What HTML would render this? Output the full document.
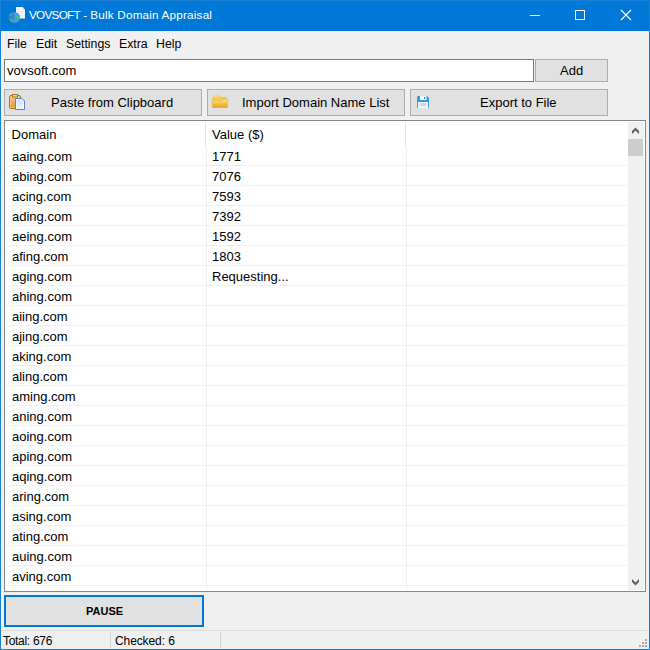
<!DOCTYPE html>
<html><head><meta charset="utf-8">
<style>
*{margin:0;padding:0;box-sizing:border-box}
html,body{width:650px;height:650px;overflow:hidden;background:#F0F0F0}
body{position:relative;font-family:"Liberation Sans",sans-serif;font-size:12px;color:#000}
.a{position:absolute}
.t{position:absolute;white-space:pre;line-height:1}
#win{left:0;top:0;width:650px;height:650px;border:1px solid #1A80D6}
#title{left:1px;top:1px;width:648px;height:30px;background:#0078D7}
.btn{position:absolute;background:#E1E1E1;border:1px solid #ADADAD}
.c{font-size:13px}
.m{font-size:12.3px}
.hl{position:absolute;height:1px;background:#F0F0F0;left:6px;width:621px}
.vl{position:absolute;width:1px;background:#F0F0F0;top:146px;height:444px}
</style></head><body>
<div class="a" id="win"></div>
<div class="a" id="title">
  <svg class="a" style="left:-1px;top:-1px" width="30" height="30" viewBox="0 0 30 30">
    <path d="M16 7 H22.5 L25 9.5 V18.5 H16 Z" fill="#F7F7F7"/>
    <path d="M22.5 7 V9.5 H25 Z" fill="#D9D4CC"/>
    <path d="M17.5 11.5 H23.5 M17.5 13.5 H23.5 M17.5 15.5 H23.5" stroke="#E2E2E2" stroke-width="0.7"/>
    <circle cx="14.5" cy="17.4" r="5.5" fill="#4A9BE0"/>
    <path d="M14 11.9 A5.5 5.5 0 0 0 14 22.9 Z" fill="#3A82C6"/>
    <path d="M9.6 15.5 Q10.5 13 12.3 12.7 Q12.2 15 10.2 16.3 Z" fill="#2FC56A"/>
    <path d="M10 19 Q12 18.2 13.8 20 Q13.5 22.5 11.8 22.2 Q10.2 21 10 19 Z" fill="#2FC56A"/>
    <path d="M16.5 16.5 Q17.5 14.5 19.5 15.5 Q20.3 18 18.7 19.5 Q16.5 19.3 16.5 16.5 Z" fill="#33D06E"/>
  </svg>
  <div class="t" style="left:28px;top:8px;color:#fff;font-size:11.7px"><span style="letter-spacing:-0.7px">VOVSOFT</span><span style="letter-spacing:0px"> - </span><span style="letter-spacing:0.2px">Bulk Domain Appraisal</span></div>
  <div class="a" style="left:529px;top:14px;width:10px;height:1px;background:#fff"></div>
  <div class="a" style="left:574px;top:9px;width:10px;height:10px;border:1px solid #fff"></div>
  <svg class="a" style="left:619px;top:8px" width="13" height="13" viewBox="0 0 13 13">
    <path d="M1 1 L11 11 M11 1 L1 11" stroke="#fff" stroke-width="1.1"/>
  </svg>
</div>
<!-- menu -->
<div class="t m" style="left:7px;top:38px">File</div>
<div class="t m" style="left:36px;top:38px">Edit</div>
<div class="t m" style="left:66px;top:38px">Settings</div>
<div class="t m" style="left:119px;top:38px">Extra</div>
<div class="t m" style="left:156px;top:38px">Help</div>
<!-- edit -->
<div class="a" style="left:4px;top:59px;width:530px;height:23px;background:#fff;border:1px solid #7A7A7A"></div>
<div class="t c" style="left:7px;top:64px">vovsoft.com</div>
<div class="btn" style="left:535px;top:59px;width:73px;height:23px"></div>
<div class="t c" style="left:560px;top:64px">Add</div>
<!-- buttons -->
<div class="btn" style="left:4px;top:89px;width:198px;height:27px"></div>
<div class="btn" style="left:207px;top:89px;width:198px;height:27px"></div>
<div class="btn" style="left:410px;top:89px;width:198px;height:27px"></div>
<div class="t c" style="left:51px;top:96px">Paste from Clipboard</div>
<div class="t c" style="left:242px;top:96px">Import Domain Name List</div>
<div class="t c" style="left:480px;top:96px">Export to File</div>
<!-- icons -->
<svg class="a" style="left:8px;top:93px" width="20" height="18" viewBox="0 0 20 18">
  <defs>
    <linearGradient id="cb" x1="0" y1="0" x2="0" y2="1"><stop offset="0" stop-color="#F3CC88"/><stop offset="1" stop-color="#D9953A"/></linearGradient>
    <linearGradient id="dc" x1="0" y1="0" x2="1" y2="1"><stop offset="0" stop-color="#C9DDF7"/><stop offset="1" stop-color="#F4F8FE"/></linearGradient>
    <linearGradient id="fd" x1="0" y1="0" x2="0" y2="1"><stop offset="0" stop-color="#FBE38A"/><stop offset="1" stop-color="#E8A30E"/></linearGradient>
  </defs>
  <rect x="1.5" y="2.5" width="11" height="13" rx="1.5" fill="url(#cb)" stroke="#B06F1C"/>
  <rect x="2.5" y="3.5" width="9" height="11" rx="0.5" fill="none" stroke="#F6D79E" stroke-width="0.6"/>
  <rect x="4.5" y="1.5" width="5" height="2.5" fill="#F8DE7A" stroke="#B06F1C" stroke-width="0.9"/>
  <path d="M7.5 5.5 H14 L16.5 8 V16.5 H7.5 Z" fill="url(#dc)" stroke="#4F86D8"/>
  <path d="M8.5 6.5 H13.6 L15.5 8.4 V15.5 H8.5 Z" fill="none" stroke="#FFFFFF" stroke-width="0.7" opacity="0.8"/>
</svg>
<svg class="a" style="left:211px;top:95px" width="18" height="14" viewBox="0 0 18 14">
  <path d="M2 2.5 Q2 1 3.5 1 H8.8 L10.3 2.6 H14.8 Q15.8 2.6 15.8 3.6 V12.5 H2 Z" fill="#F3CF4E" stroke="#DDB13C" stroke-width="0.5"/>
  <path d="M2.6 1.6 H8.6" stroke="#FBEA9A" stroke-width="0.8"/>
  <path d="M1.2 5.2 H11 Q11.8 5.2 12.4 4.3 H16.6 Q17 4.3 16.9 4.8 L16.3 12.5 H1.6 Z" fill="url(#fd)" stroke="#E0B035" stroke-width="0.5"/>
</svg>
<svg class="a" style="left:417px;top:96px" width="12" height="12" viewBox="0 0 12 12">
  <path d="M1.2 0 H10 L12 2 V10.8 Q12 12 10.8 12 H1.2 Q0 12 0 10.8 V1.2 Q0 0 1.2 0 Z" fill="#3A98DF"/>
  <rect x="3" y="0" width="6.5" height="4" fill="#F4F8FC"/>
  <rect x="7" y="1" width="1.3" height="2" fill="#2F8CDB"/>
  <rect x="1" y="6" width="10" height="6" fill="#F2F6FA"/>
  <rect x="2.8" y="7" width="6.5" height="3.2" fill="#D3D8DD"/>
</svg>
<!-- list -->
<div class="a" style="left:4px;top:120px;width:642px;height:472px;background:#fff;border:1px solid #828790"></div>
<div class="t c" style="left:11.6px;top:128px">Domain</div>
<div class="t c" style="left:212px;top:128px">Value ($)</div>
<div class="a" style="left:205px;top:122px;width:1px;height:24px;background:#E5E5E5"></div>
<div class="a" style="left:405px;top:122px;width:1px;height:24px;background:#E5E5E5"></div>
<div id="rows">
<div class="hl" style="top:165px"></div>
<div class="hl" style="top:185px"></div>
<div class="hl" style="top:205px"></div>
<div class="hl" style="top:225px"></div>
<div class="hl" style="top:245px"></div>
<div class="hl" style="top:265px"></div>
<div class="hl" style="top:285px"></div>
<div class="hl" style="top:305px"></div>
<div class="hl" style="top:325px"></div>
<div class="hl" style="top:345px"></div>
<div class="hl" style="top:365px"></div>
<div class="hl" style="top:385px"></div>
<div class="hl" style="top:405px"></div>
<div class="hl" style="top:425px"></div>
<div class="hl" style="top:445px"></div>
<div class="hl" style="top:465px"></div>
<div class="hl" style="top:485px"></div>
<div class="hl" style="top:505px"></div>
<div class="hl" style="top:525px"></div>
<div class="hl" style="top:545px"></div>
<div class="hl" style="top:565px"></div>
<div class="hl" style="top:585px"></div>
<div class="t c" style="left:12px;top:150px">aaing.com</div>
<div class="t c" style="left:212px;top:150px">1771</div>
<div class="t c" style="left:12px;top:170px">abing.com</div>
<div class="t c" style="left:212px;top:170px">7076</div>
<div class="t c" style="left:12px;top:190px">acing.com</div>
<div class="t c" style="left:212px;top:190px">7593</div>
<div class="t c" style="left:12px;top:210px">ading.com</div>
<div class="t c" style="left:212px;top:210px">7392</div>
<div class="t c" style="left:12px;top:230px">aeing.com</div>
<div class="t c" style="left:212px;top:230px">1592</div>
<div class="t c" style="left:12px;top:250px">afing.com</div>
<div class="t c" style="left:212px;top:250px">1803</div>
<div class="t c" style="left:12px;top:270px">aging.com</div>
<div class="t c" style="left:212px;top:270px">Requesting...</div>
<div class="t c" style="left:12px;top:290px">ahing.com</div>
<div class="t c" style="left:12px;top:310px">aiing.com</div>
<div class="t c" style="left:12px;top:330px">ajing.com</div>
<div class="t c" style="left:12px;top:350px">aking.com</div>
<div class="t c" style="left:12px;top:370px">aling.com</div>
<div class="t c" style="left:12px;top:390px">aming.com</div>
<div class="t c" style="left:12px;top:410px">aning.com</div>
<div class="t c" style="left:12px;top:430px">aoing.com</div>
<div class="t c" style="left:12px;top:450px">aping.com</div>
<div class="t c" style="left:12px;top:470px">aqing.com</div>
<div class="t c" style="left:12px;top:490px">aring.com</div>
<div class="t c" style="left:12px;top:510px">asing.com</div>
<div class="t c" style="left:12px;top:530px">ating.com</div>
<div class="t c" style="left:12px;top:550px">auing.com</div>
<div class="t c" style="left:12px;top:570px">aving.com</div>
</div>
<div class="vl" style="left:206px"></div>
<div class="vl" style="left:406px"></div>
<!-- scrollbar -->
<div class="a" style="left:628px;top:122px;width:16px;height:468px;background:#F0F0F0"></div>
<div class="a" style="left:628px;top:139px;width:15px;height:17px;background:#CDCDCD"></div>
<svg class="a" style="left:628px;top:122px" width="16" height="17" viewBox="0 0 16 17">
  <path d="M4 9 L7.5 5.5 L11 9 V12 L7.5 8.5 L4 12 Z" fill="#606060"/>
</svg>
<svg class="a" style="left:628px;top:573px" width="16" height="16" viewBox="0 0 16 16">
  <path d="M4 6 L7.5 9.5 L11 6 V9 L7.5 12.5 L4 9 Z" fill="#606060"/>
</svg>
<!-- pause -->
<div class="a" style="left:4px;top:595px;width:200px;height:32px;background:#E1E1E1;border:2px solid #0078D7"></div>
<div class="t" style="left:86px;top:606px;font-weight:bold;font-size:11px">PAUSE</div>
<!-- status -->
<div class="a" style="left:1px;top:630px;width:648px;height:1px;background:#DADADA"></div>
<div class="a" style="left:110px;top:632px;width:1px;height:16px;background:#D5D5D5"></div>
<div class="a" style="left:220px;top:632px;width:1px;height:16px;background:#D5D5D5"></div>
<div class="t" style="left:3px;top:635px;font-size:12px;letter-spacing:-0.3px">Total: 676</div>
<div class="t" style="left:115px;top:635px;font-size:12px;letter-spacing:-0.1px">Checked: 6</div>
<svg class="a" style="left:639px;top:639px" width="8" height="8" viewBox="0 0 8 8" fill="#A8A8A8">
  <rect x="6" y="0" width="2" height="2"/><rect x="3" y="3" width="2" height="2"/><rect x="6" y="3" width="2" height="2"/>
  <rect x="0" y="6" width="2" height="2"/><rect x="3" y="6" width="2" height="2"/><rect x="6" y="6" width="2" height="2"/>
</svg>
</body></html>
